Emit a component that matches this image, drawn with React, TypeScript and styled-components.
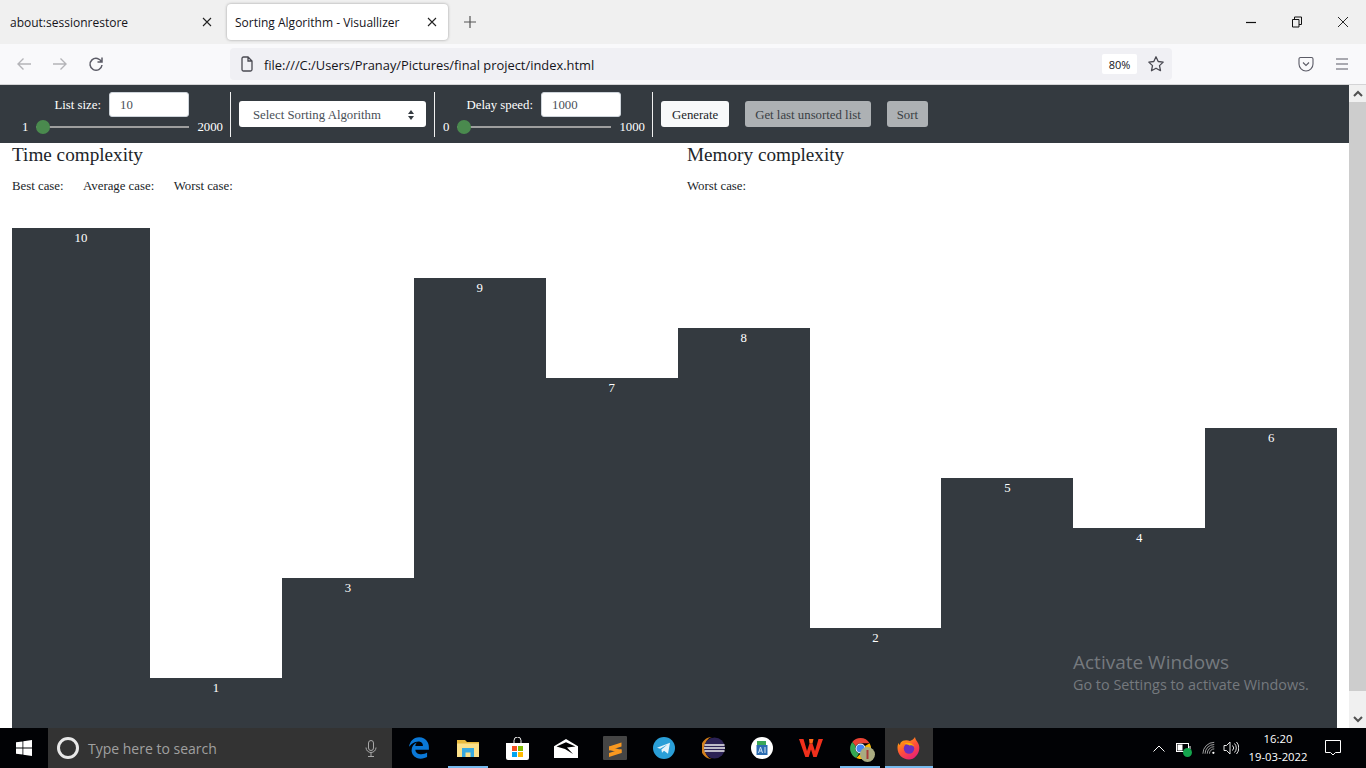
import React from "react";
import styled, { createGlobalStyle } from "styled-components";
import { FaEdgeLegacy } from "react-icons/fa6";

const GlobalStyle = createGlobalStyle`
  html, body {
    margin: 0;
    padding: 0;
    height: 768px;
    overflow: hidden;
    background: #fff;
  }
  * { box-sizing: border-box; }
`;

const UI = `"Open Sans", "Noto Sans", sans-serif`;
const SERIF = `"Liberation Serif", serif`;
const DARK = "#343a40";

const bars = [10, 1, 3, 9, 7, 8, 2, 5, 4, 6];

const App = () => {
  return (
    <Screen>
      <GlobalStyle />
      <TabStrip>
        <Tab>
          <TabTitle>about:sessionrestore</TabTitle>
          <CloseIcon />
        </Tab>
        <ActiveTab>
          <TabTitle>Sorting Algorithm - Visuallizer</TabTitle>
          <CloseIcon />
        </ActiveTab>
        <NewTab>
          <svg width="14" height="14" viewBox="0 0 14 14" fill="none" stroke="#555" strokeWidth="1.2">
            <path d="M7 1v12M1 7h12" />
          </svg>
        </NewTab>
        <WindowButtons>
          <WinButton>
            <svg width="12" height="12" viewBox="0 0 12 12" stroke="#111" strokeWidth="1.2">
              <path d="M1 6.500h10" />
            </svg>
          </WinButton>
          <WinButton>
            <svg width="12" height="12" viewBox="0 0 12 12" fill="none" stroke="#111" strokeWidth="1">
              <path d="M1.500 3.500h6.500v7.500h-6.500zM3.500 3.500v-2.500h7v7.500h-2.500" />
            </svg>
          </WinButton>
          <WinButton>
            <svg width="12" height="12" viewBox="0 0 12 12" stroke="#111" strokeWidth="0.9">
              <path d="M1 1l10 10M11 1l-10 10" />
            </svg>
          </WinButton>
        </WindowButtons>
      </TabStrip>

      <NavBar>
        <NavIcons>
          <svg width="18" height="18" viewBox="0 0 18 18" fill="none" stroke="#b4b4b8" strokeWidth="1.4">
            <path d="M16 9H3M8.500 3.500L3 9l5.500 5.500" />
          </svg>
          <svg width="18" height="18" viewBox="0 0 18 18" fill="none" stroke="#b4b4b8" strokeWidth="1.4">
            <path d="M2 9h13M9.500 3.500L15 9l-5.500 5.500" />
          </svg>
          <svg width="18" height="18" viewBox="0 0 18 18" fill="none" stroke="#5b5b66" strokeWidth="1.5">
            <path d="M14.600 7A6 6 0 1 0 15 10M15 2.500V7h-4.500" />
          </svg>
        </NavIcons>
        <UrlBar>
          <svg width="14" height="16" viewBox="0 0 14 16" fill="none" stroke="#4a4a52" strokeWidth="1.3">
            <path d="M2 2.500a1.500 1.500 0 0 1 1.500-1.500H8l4 4v8.500a1.500 1.500 0 0 1-1.500 1.500h-7A1.500 1.500 0 0 1 2 13.500zM8 1v4h4" />
          </svg>
          <UrlText>file:///C:/Users/Pranay/Pictures/final project/index.html</UrlText>
          <ZoomBadge>80%</ZoomBadge>
          <svg width="18" height="18" viewBox="0 0 18 18" fill="none" stroke="#4a4a52" strokeWidth="1.3" strokeLinejoin="round">
            <path d="M9 1.800l2.200 4.700 5 .6-3.700 3.500 1 5.100L9 13.200l-4.500 2.500 1-5.100L1.800 7.100l5-.6z" />
          </svg>
        </UrlBar>
        <NavRight>
          <svg width="16" height="16" viewBox="0 0 16 16" fill="none" stroke="#5b5b66" strokeWidth="1.1">
            <path d="M2.500 1.500h11A1.500 1.500 0 0 1 15 3v5a7 7 0 0 1-14 0V3a1.500 1.500 0 0 1 1.500-1.500z" />
            <path d="M5 6.500l3 3 3-3" />
          </svg>
          <svg width="16" height="16" viewBox="0 0 16 16" stroke="#5b5b66" strokeWidth="1.2">
            <path d="M2 3h12M2 8h12M2 13h12" />
          </svg>
        </NavRight>
      </NavBar>

      <Viewport>
        <Page>
          <Toolbar>
            <SliderGroup>
              <FieldRow $inset={33}>
                <ToolLabel>List size:</ToolLabel>
                <NumberBox>10</NumberBox>
              </FieldRow>
              <SliderRow>
                <span>1</span>
                <SliderTrack $width={153}>
                  <SliderKnob />
                </SliderTrack>
                <span>2000</span>
              </SliderRow>
            </SliderGroup>
            <Divider />
            <SelectBox>
              <span>Select Sorting Algorithm</span>
              <svg width="8" height="10" viewBox="0 0 8 10" fill="#343a40">
                <path d="M4 0l3 4H1zM4 10L1 6h6z" />
              </svg>
            </SelectBox>
            <Divider />
            <DelayGroup>
              <FieldRow $inset={23}>
                <ToolLabel>Delay speed:</ToolLabel>
                <NumberBox>1000</NumberBox>
              </FieldRow>
              <SliderRow>
                <span>0</span>
                <SliderTrack $width={154}>
                  <SliderKnob />
                </SliderTrack>
                <span>1000</span>
              </SliderRow>
            </DelayGroup>
            <Divider />
            <ActionButton $primary>Generate</ActionButton>
            <ActionButton>Get last unsorted list</ActionButton>
            <ActionButton>Sort</ActionButton>
          </Toolbar>

          <InfoRow>
            <InfoColumn>
              <InfoTitle>Time complexity</InfoTitle>
              <CaseRow>
                <span>Best case:</span>
                <span>Average case:</span>
                <span>Worst case:</span>
              </CaseRow>
            </InfoColumn>
            <InfoColumn>
              <InfoTitle>Memory complexity</InfoTitle>
              <CaseRow>
                <span>Worst case:</span>
              </CaseRow>
            </InfoColumn>
          </InfoRow>

          <Chart>
            {bars.map((value, i) => (
              <Bar key={i} $value={value} $first={i === 0}>
                {value}
              </Bar>
            ))}
          </Chart>

          <Watermark>
            <WatermarkTitle>Activate Windows</WatermarkTitle>
            <WatermarkText>Go to Settings to activate Windows.</WatermarkText>
          </Watermark>
        </Page>

        <ScrollBar>
          <ScrollArrow>
            <svg width="10" height="7" viewBox="0 0 10 7" fill="none" stroke="#505050" strokeWidth="2">
              <path d="M1 6l4-4 4 4" />
            </svg>
          </ScrollArrow>
          <ScrollThumb />
          <ScrollArrow>
            <svg width="10" height="7" viewBox="0 0 10 7" fill="none" stroke="#505050" strokeWidth="2">
              <path d="M1 1l4 4 4-4" />
            </svg>
          </ScrollArrow>
        </ScrollBar>
      </Viewport>

      <Taskbar>
        <StartButton>
          <svg width="16" height="16" viewBox="0 0 16 16" fill="#fff">
            <path d="M0 2.300l6.500-.9v6.200H0zM7.300 1.300L16 0v7.600H7.300zM0 8.400h6.500v6.200L0 13.700zM7.300 8.400H16V16l-8.700-1.200z" />
          </svg>
        </StartButton>
        <SearchBox>
          <CortanaRing />
          <SearchText>Type here to search</SearchText>
          <svg width="12" height="17" viewBox="0 0 12 17" fill="none" stroke="#a8a8a8" strokeWidth="1">
            <rect x="3.500" y="0.500" width="5" height="10" rx="2.500" />
            <path d="M1 7.500a5 5 0 0 0 10 0M6 12.500v3.500M3 16.500h6" />
          </svg>
        </SearchBox>
        <AppSlot>
          <FaEdgeLegacy size={22} color="#0a78d7" />
        </AppSlot>
        <AppSlot $running>
          <svg width="22" height="18" viewBox="0 0 22 18">
            <path fill="#e8b93e" d="M0 1h8l2 2h12v15H0z" />
            <path fill="#fbe08a" d="M0 4.500h22V18H0z" />
            <path fill="#37a9e0" d="M5 9h12v9h-3.500v-4.500h-5V18H5z" />
          </svg>
        </AppSlot>
        <AppSlot>
          <svg width="23" height="23" viewBox="0 0 23 23">
            <path fill="none" stroke="#eee" strokeWidth="1" d="M8 6V3.500a3.500 3.500 0 0 1 7 0V6" />
            <path fill="#fff" d="M0 6h23v15a2 2 0 0 1-2 2H2a2 2 0 0 1-2-2z" />
            <path fill="#f25022" d="M6 9h5v5H6z" />
            <path fill="#7fba00" d="M12 9h5v5h-5z" />
            <path fill="#00a4ef" d="M6 15h5v5H6z" />
            <path fill="#ffb900" d="M12 15h5v5h-5z" />
          </svg>
        </AppSlot>
        <AppSlot>
          <svg width="24" height="19" viewBox="0 0 24 19">
            <path fill="#fff" d="M0 7.300L12 0l12 7.300V19H0z" />
            <path fill="#000" d="M2.500 7.500L12 3.200l9.500 4.300-8.500 1 6 6.500-8-5z" />
          </svg>
        </AppSlot>
        <AppSlot>
          <svg width="24" height="24" viewBox="0 0 24 24">
            <rect width="24" height="24" rx="1" fill="#454545" />
            <path fill="#f89820" d="M18.500 6.500v4L6 14.500v-4z" />
            <path fill="#f89820" d="M6 10.500l12.500 3.500v3L6 14z" />
            <path fill="#f89820" d="M18.500 13v4L6 21v-4z" />
          </svg>
        </AppSlot>
        <AppSlot>
          <svg width="22" height="22" viewBox="0 0 22 22">
            <circle cx="11" cy="11" r="11" fill="#2a9fd8" />
            <path fill="#e6f3fa" d="M4 10.800l13-5-2 11-4-3-2 2-.6-3.300 6-5-7.300 4.300z" />
          </svg>
        </AppSlot>
        <AppSlot>
          <svg width="23" height="22" viewBox="0 0 23 22">
            <path fill="#d4801c" d="M10 0a11 11 0 1 0 0 22C5.500 21 3 16.500 3 11S5.500 1 10 0z" />
            <circle cx="12.500" cy="11" r="10.500" fill="#2c2255" />
            <path stroke="#eee" strokeWidth="1.500" d="M2.500 8h20M2 11h21M2.500 14h20" />
          </svg>
        </AppSlot>
        <AppSlot>
          <svg width="22" height="22" viewBox="0 0 22 22">
            <circle cx="11" cy="11" r="11" fill="#fff" />
            <path fill="#3aa757" d="M6 4h9v5H6z" />
            <path fill="#2b6cb0" d="M5.500 8h11v10h-11z" />
            <path stroke="#cfe2f5" strokeWidth="1" fill="none" d="M7.500 16l2-6 2 6M8.300 14h2.400M14 10v6" />
          </svg>
        </AppSlot>
        <AppSlot>
          <svg width="24" height="18" viewBox="0 0 24 18">
            <path fill="#f0301c" d="M0 0h4.500l3.500 12 2.500-7.500h3L16 12l3.500-12H24l-6.300 18h-3.400L12 10.500 9.700 18H6.300z" />
            <path fill="#ff6a1a" d="M10 0h4.500l-1 4.500h-3z" />
          </svg>
        </AppSlot>
        <AppSlot $running>
          <ChromeStack>
            <svg width="21" height="21" viewBox="0 0 22 22">
              <path fill="#ea4335" d="M11 0a11 11 0 0 1 9.500 5.500H11a5.500 5.500 0 0 0-5 3.200L2.400 4.300A11 11 0 0 1 11 0z" />
              <path fill="#34a853" d="M2.400 4.300L6 8.700A5.500 5.500 0 0 0 9.500 16.300L6.500 21A11 11 0 0 1 2.400 4.300z" />
              <path fill="#fbbc05" d="M20.500 5.500A11 11 0 0 1 6.500 21L11 16.500a5.500 5.500 0 0 0 4.800-8z" />
              <circle cx="11" cy="11" r="5.300" fill="#fff" />
              <circle cx="11" cy="11" r="4.200" fill="#4285f4" />
            </svg>
            <ProfileBadge>
              <svg width="15" height="15" viewBox="0 0 15 15">
                <circle cx="7.500" cy="7.500" r="7.500" fill="#a9ab80" />
                <path fill="#a83a3a" d="M6.500 3h2v9h-2z" />
              </svg>
            </ProfileBadge>
          </ChromeStack>
        </AppSlot>
        <FirefoxSlot>
          <svg width="24" height="24" viewBox="0 0 24 24">
            <defs>
              <linearGradient id="fx" x1="0.200" y1="0" x2="0.800" y2="1">
                <stop offset="0" stopColor="#ffb000" />
                <stop offset="0.500" stopColor="#ff4f3a" />
                <stop offset="1" stopColor="#e3197f" />
              </linearGradient>
            </defs>
            <path fill="url(#fx)" d="M18 1c.3 2.500 1.800 3.500 3.500 7 1.500 3.200 1 8-2 11.500C17 22.500 14.500 23.500 12 23.500 5.500 23.500.5 18.500.5 12c0-2 .3-3.500 1-5 .3 1 .8 1.500 1.500 2 0-2 1.500-3.500 3-4.200C8 4 11 4 13 5c2-1 4-2 5-4z" />
            <circle cx="12" cy="12.500" r="5.200" fill="#6a2fbf" />
            <path fill="#ffb000" d="M7 8c3-2.500 9-1.500 10.500 3-1.500-1.500-3-2-5-1.500-1.500-1-3.500-1.500-5.500-1.500z" />
          </svg>
        </FirefoxSlot>
        <Tray>
          <svg width="12" height="7" viewBox="0 0 12 7" fill="none" stroke="#fff" strokeWidth="1">
            <path d="M.5 6.500L6 1l5.500 5.500" />
          </svg>
          <BatteryWrap>
            <svg width="15" height="10" viewBox="0 0 15 10" fill="none" stroke="#fff" strokeWidth="1">
              <rect x="0.500" y="0.500" width="12" height="8" />
              <rect x="1.500" y="1.500" width="5" height="6" fill="#fff" stroke="none" />
              <path d="M14 3v3" />
            </svg>
            <LeafDot />
          </BatteryWrap>
          <WifiIcon width="14" height="14" viewBox="0 0 16 15" fill="none" stroke="#c8c8c8" strokeWidth="0.900">
            <path d="M1 14A13 13 0 0 1 14 1M3.500 14A10.500 10.500 0 0 1 14 3.500M6 14a8 8 0 0 1 8-8M8.500 14a5.500 5.500 0 0 1 5.500-5.500" />
            <circle cx="13" cy="13" r="1.300" fill="#fff" stroke="none" />
          </WifiIcon>
          <SpeakerIcon width="16" height="14" viewBox="0 0 16 14" fill="none" stroke="#fff" strokeWidth="0.900">
            <path d="M1 4.500h2.500L7 1v12L3.500 9.500H1zM9.500 4.500a3.500 3.500 0 0 1 0 5M11.500 2.500a6.500 6.500 0 0 1 0 9M13.500 1a9 9 0 0 1 0 12" />
          </SpeakerIcon>
          <Clock>
            <span>16:20</span>
            <span>19-03-2022</span>
          </Clock>
          <svg width="16" height="17" viewBox="0 0 16 17" fill="none" stroke="#fff" strokeWidth="1">
            <path d="M.5 .5h15v12h-5l-2.500 2.500-2.500-2.500h-5z" />
          </svg>
        </Tray>
      </Taskbar>
    </Screen>
  );
};
export default App;

const CloseIcon = () => (
  <svg width="10" height="10" viewBox="0 0 10 10" stroke="#222" strokeWidth="1.100">
    <path d="M1 1l8 8M9 1l-8 8" />
  </svg>
);

const Screen = styled.div`
  width: 1366px;
  height: 768px;
  display: flex;
  flex-direction: column;
  overflow: hidden;
`;

const TabStrip = styled.div`
  height: 44px;
  flex: none;
  display: flex;
  align-items: center;
  background: #f0f0f0;
  font-family: ${UI};
  font-size: 12px;
  color: #15141a;
`;
const Tab = styled.div`
  width: 224px;
  height: 36px;
  flex: none;
  margin-right: 3px;
  padding: 0 12px 0 10px;
  display: flex;
  align-items: center;
  justify-content: space-between;
`;
const ActiveTab = styled(Tab)`
  width: 221px;
  margin-right: 0;
  padding: 0 11px 0 8px;
  background: #fff;
  border-radius: 4px;
  box-shadow: 0 0 3px rgba(0, 0, 0, 0.35);
`;
const TabTitle = styled.span`
  white-space: nowrap;
`;
const NewTab = styled.div`
  width: 14px;
  height: 14px;
  margin-left: 15px;
  display: flex;
`;
const WindowButtons = styled.div`
  margin-left: auto;
  margin-right: 17px;
  display: flex;
  gap: 34px;
`;
const WinButton = styled.div`
  width: 12px;
  height: 12px;
  display: flex;
`;

const NavBar = styled.div`
  height: 41px;
  flex: none;
  display: flex;
  align-items: center;
  background: #f9f9fb;
  border-bottom: 1px solid #d4d4d6;
  font-family: ${UI};
`;
const NavIcons = styled.div`
  width: 230px;
  flex: none;
  padding-left: 15px;
  display: flex;
  gap: 18px;
`;
const UrlBar = styled.div`
  width: 942px;
  height: 32px;
  flex: none;
  padding: 0 7px 0 10px;
  display: flex;
  align-items: center;
  background: #f0f0f4;
  border-radius: 4px;
`;
const UrlText = styled.span`
  margin-left: 10px;
  padding-top: 1px;
  flex: 1;
  font-size: 12.880px;
  color: #15141a;
  white-space: nowrap;
`;
const ZoomBadge = styled.span`
  width: 35px;
  height: 20px;
  margin-right: 10px;
  display: flex;
  align-items: center;
  justify-content: center;
  background: #fff;
  border-radius: 2px;
  font-size: 11px;
  color: #15141a;
`;
const NavRight = styled.div`
  margin-left: 126px;
  display: flex;
  gap: 20px;
`;

const Viewport = styled.div`
  height: 643px;
  flex: none;
  display: flex;
`;
const Page = styled.div`
  position: relative;
  width: 1349px;
  height: 643px;
  flex: none;
  overflow: hidden;
  background: #fff;
  font-family: ${SERIF};
  color: #212529;
`;

const Toolbar = styled.div`
  height: 58px;
  padding-left: 22px;
  display: flex;
  align-items: center;
  background: ${DARK};
  color: #fff;
  font-size: 12.800px;
`;
const SliderGroup = styled.div`
  width: 200px;
  flex: none;
`;
const DelayGroup = styled.div`
  width: 201px;
  flex: none;
`;
const FieldRow = styled.div<{ $inset: number }>`
  height: 25px;
  padding-right: ${(p) => p.$inset}px;
  display: flex;
  align-items: center;
  justify-content: flex-end;
  gap: 8px;
`;
const ToolLabel = styled.span`
  padding-top: 1px;
  white-space: nowrap;
`;
const NumberBox = styled.div`
  width: 80px;
  height: 25px;
  padding: 1px 0 0 10px;
  display: flex;
  align-items: center;
  background: #fff;
  border: 1px solid #ced4da;
  border-radius: 3px;
  color: #495057;
`;
const SliderRow = styled.div`
  height: 18px;
  margin-top: 1px;
  display: flex;
  align-items: center;
  gap: 8px;
  white-space: nowrap;
`;
const SliderTrack = styled.div<{ $width: number }>`
  position: relative;
  width: ${(p) => p.$width}px;
  height: 2px;
  flex: none;
  background: #9e9e9e;
`;
const SliderKnob = styled.div`
  position: absolute;
  left: 0;
  top: -6px;
  width: 14px;
  height: 14px;
  border-radius: 50%;
  background: #4a8a4e;
`;
const Divider = styled.div`
  width: 1px;
  height: 45px;
  flex: none;
  margin: 0 8px;
  background: #f0f0f0;
`;
const SelectBox = styled.div`
  width: 187px;
  height: 26px;
  flex: none;
  padding: 2px 11px 0 14px;
  display: flex;
  align-items: center;
  justify-content: space-between;
  background: #fff;
  border-radius: 3px;
  color: #495057;
`;
const ActionButton = styled.div<{ $primary?: boolean }>`
  height: 26px;
  flex: none;
  padding: 2px ${(p) => (p.$primary ? 11 : 10)}px 0;
  margin-right: 16px;
  display: flex;
  align-items: center;
  white-space: nowrap;
  border-radius: 3px;
  background: ${(p) => (p.$primary ? "#f8f9fa" : "#adb1b4")};
  color: ${(p) => (p.$primary ? "#212529" : "#3a3f44")};
`;

const InfoRow = styled.div`
  display: flex;
  height: 85px;
  padding-left: 12px;
`;
const InfoColumn = styled.div`
  width: 675px;
  flex: none;
`;
const InfoTitle = styled.div`
  font-size: 19.200px;
  line-height: 23px;
`;
const CaseRow = styled.div`
  margin-top: 13px;
  display: flex;
  gap: 19.500px;
  font-size: 12.800px;
  line-height: 14px;
`;

const Chart = styled.div`
  height: 500px;
  padding-left: 12px;
  display: flex;
  align-items: flex-end;
`;
const Bar = styled.div<{ $value: number; $first?: boolean }>`
  width: ${(p) => (p.$first ? 138 : 131.91)}px;
  height: ${(p) => p.$value * 50}px;
  flex: none;
  padding-top: 3px;
  text-align: center;
  background: ${DARK};
  color: #fff;
  font-size: 12.800px;
  line-height: 14px;
`;

const Watermark = styled.div`
  position: absolute;
  left: 1073px;
  top: 564px;
  font-family: ${UI};
  color: #75797e;
`;
const WatermarkTitle = styled.div`
  font-size: 19px;
  line-height: 26px;
`;
const WatermarkText = styled.div`
  font-size: 14.400px;
  line-height: 20px;
  white-space: nowrap;
`;

const ScrollBar = styled.div`
  width: 17px;
  flex: none;
  display: flex;
  flex-direction: column;
  background: #f0f0f0;
`;
const ScrollArrow = styled.div`
  height: 17px;
  flex: none;
  display: flex;
  align-items: center;
  justify-content: center;
`;
const ScrollThumb = styled.div`
  flex: 1;
  margin-bottom: 20px;
  background: #cdcdcd;
`;

const Taskbar = styled.div`
  height: 40px;
  flex: none;
  display: flex;
  align-items: center;
  background: #010205;
  font-family: ${UI};
`;
const StartButton = styled.div`
  width: 48px;
  height: 40px;
  flex: none;
  display: flex;
  align-items: center;
  justify-content: center;
`;
const SearchBox = styled.div`
  width: 344px;
  height: 40px;
  flex: none;
  margin-right: 2.500px;
  padding: 0 15px 0 9px;
  display: flex;
  align-items: center;
  background: #333;
`;
const CortanaRing = styled.div`
  width: 22px;
  height: 22px;
  flex: none;
  border: 3px solid #e8e8e8;
  border-radius: 50%;
`;
const SearchText = styled.span`
  flex: 1;
  margin-left: 9px;
  font-size: 14px;
  color: #a0a0a0;
`;
const AppSlot = styled.div<{ $running?: boolean }>`
  position: relative;
  width: 49px;
  height: 40px;
  flex: none;
  display: flex;
  align-items: center;
  justify-content: center;
  &::after {
    content: "";
    display: ${(p) => (p.$running ? "block" : "none")};
    position: absolute;
    left: 4.500px;
    right: 4.500px;
    bottom: 0;
    height: 2px;
    background: #76b9ed;
  }
`;
const FirefoxSlot = styled(AppSlot)`
  width: 48px;
  background: #333;
  &::after {
    display: block;
    left: 0;
    right: 0;
  }
`;
const ChromeStack = styled.div`
  position: relative;
  width: 21px;
  height: 21px;
  display: flex;
`;
const ProfileBadge = styled.div`
  position: absolute;
  right: -4px;
  bottom: -3px;
  width: 15px;
  height: 15px;
  display: flex;
`;
const Tray = styled.div`
  flex: 1;
  display: flex;
  align-items: center;
  justify-content: flex-end;
  padding-right: 25px;
`;
const BatteryWrap = styled.div`
  position: relative;
  width: 15px;
  height: 10px;
  display: flex;
  margin-left: 11px;
`;
const WifiIcon = styled.svg`
  margin-left: 11px;
  flex: none;
`;
const SpeakerIcon = styled.svg`
  margin-left: 7px;
  flex: none;
`;
const LeafDot = styled.div`
  position: absolute;
  right: -1px;
  bottom: -4px;
  width: 9px;
  height: 9px;
  border-radius: 50%;
  background: #14a44d;
`;
const Clock = styled.div`
  width: 58px;
  margin: -2px 18px 0 10px;
  display: flex;
  flex-direction: column;
  align-items: center;
  gap: 3px;
  color: #fff;
  font-size: 11.300px;
  line-height: 15px;
  white-space: nowrap;
`;
